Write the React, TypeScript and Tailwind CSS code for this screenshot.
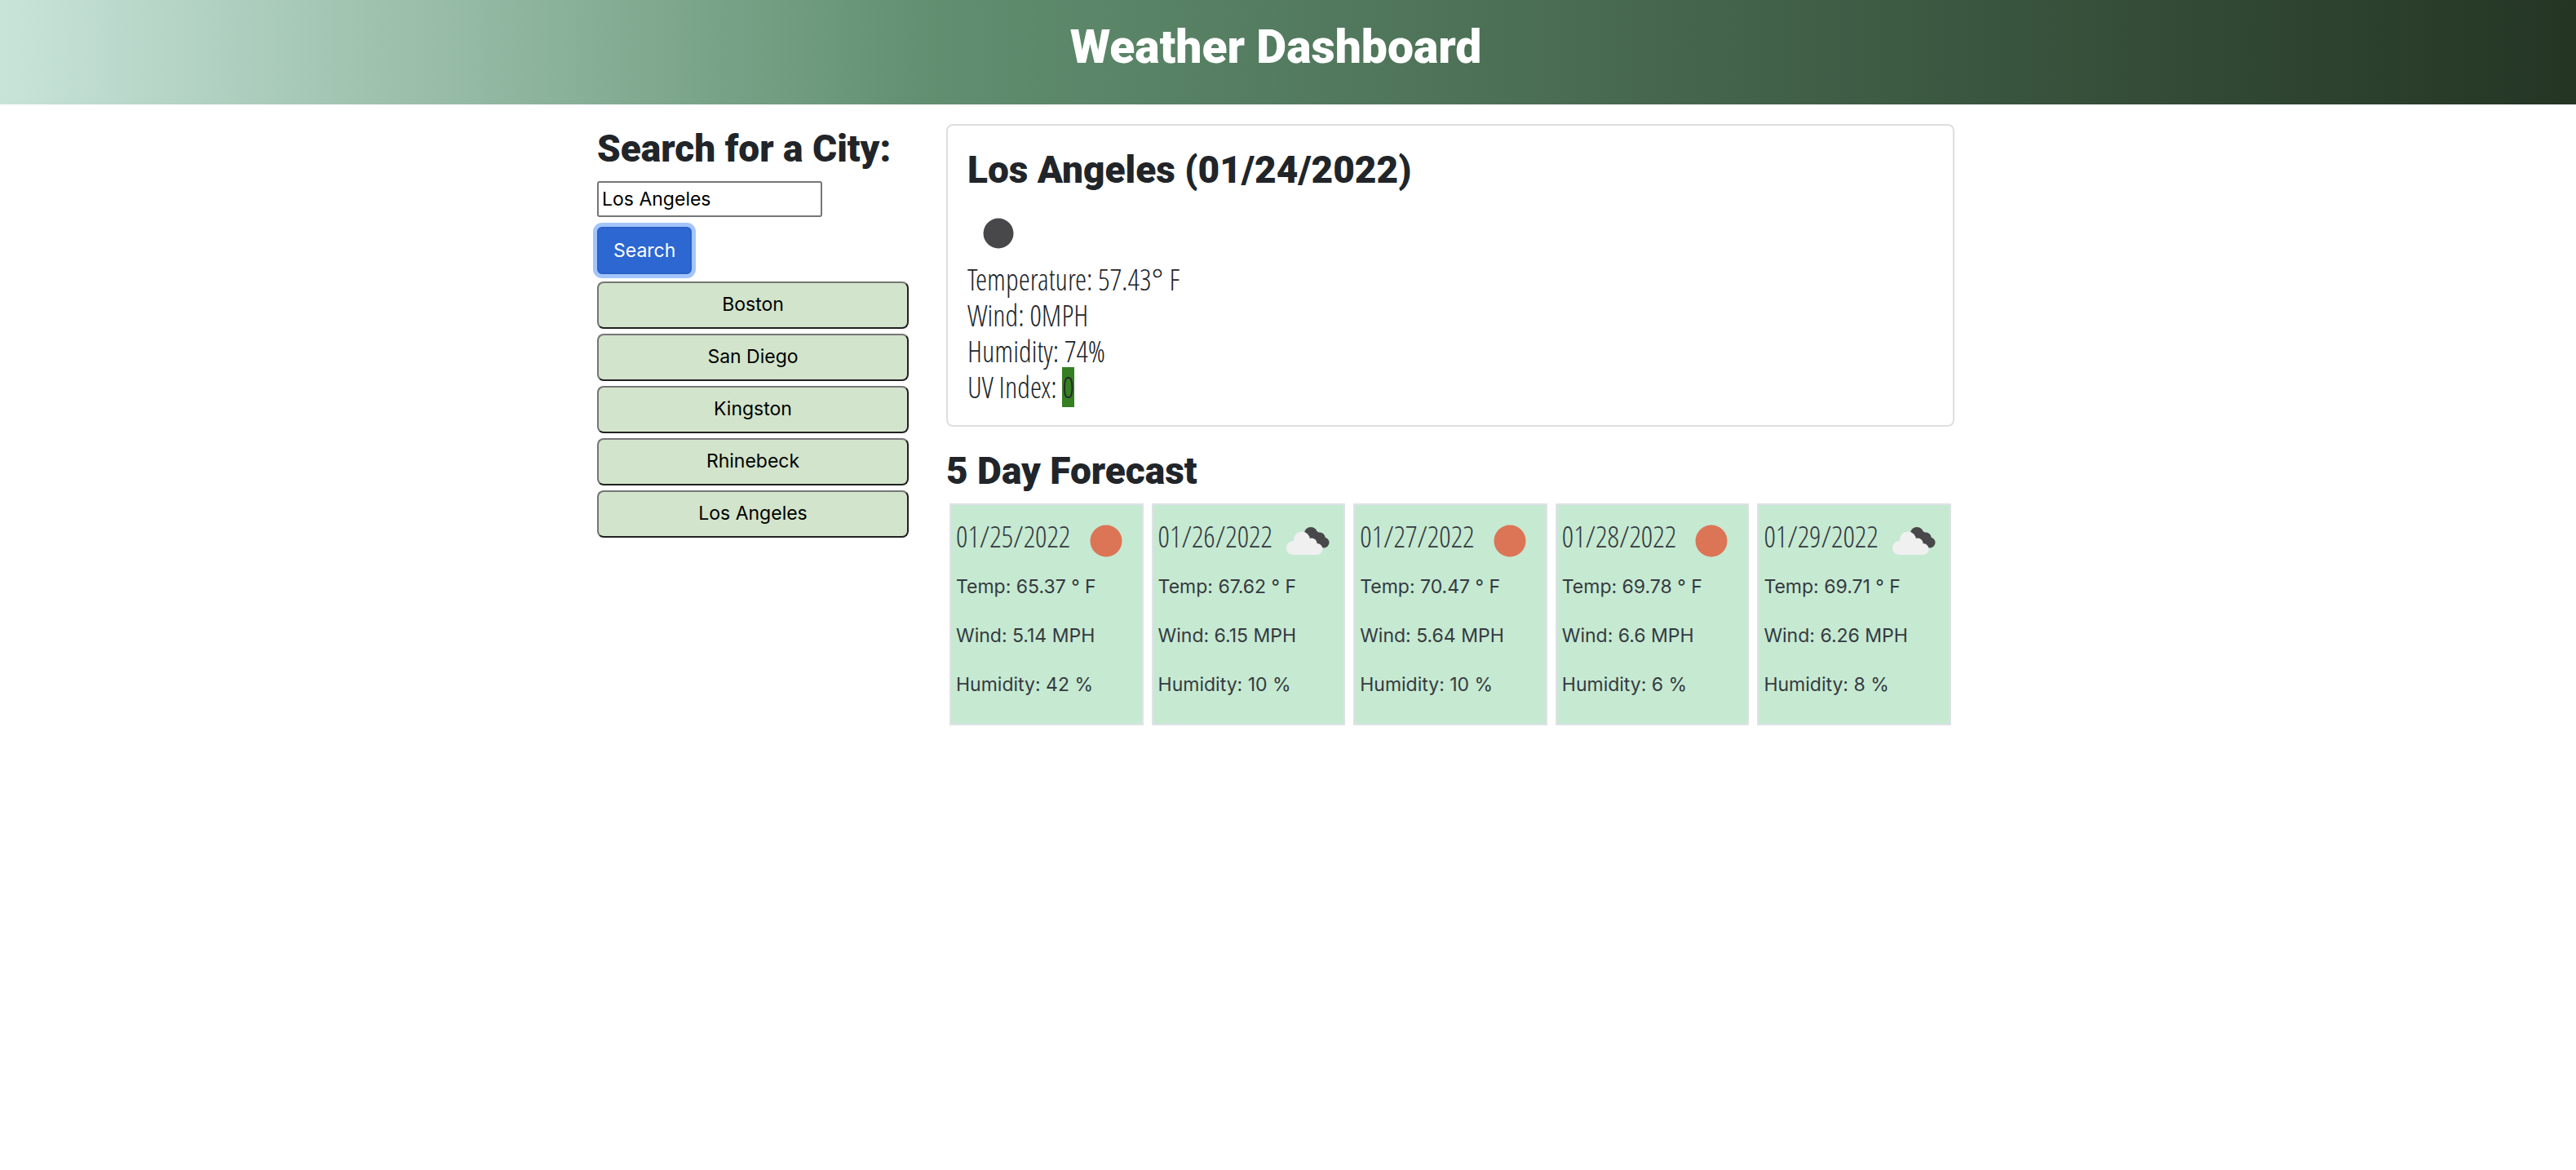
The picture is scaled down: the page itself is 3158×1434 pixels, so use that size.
const HEADING = "font-['Roboto',sans-serif] font-black";
const CONDENSED = "font-['Open_Sans_Condensed_Light','Open_Sans_Condensed',sans-serif] font-light";

const cities = ["Boston", "San Diego", "Kingston", "Rhinebeck", "Los Angeles"];

type Sky = "clear" | "broken";

const forecast: { date: string; sky: Sky; temp: string; wind: string; humidity: string }[] = [
  { date: "01/25/2022", sky: "clear", temp: "65.37", wind: "5.14", humidity: "42" },
  { date: "01/26/2022", sky: "broken", temp: "67.62", wind: "6.15", humidity: "10" },
  { date: "01/27/2022", sky: "clear", temp: "70.47", wind: "5.64", humidity: "10" },
  { date: "01/28/2022", sky: "clear", temp: "69.78", wind: "6.6", humidity: "6" },
  { date: "01/29/2022", sky: "broken", temp: "69.71", wind: "6.26", humidity: "8" },
];

function SkyIcon({ sky }: { sky: Sky }) {
  if (sky === "clear") {
    return (
      <svg viewBox="0 0 60 60" className="size-[60px] shrink-0" role="img" aria-label="Clear sky">
        <circle cx="30" cy="30" r="19.5" fill="#dc7556" />
      </svg>
    );
  }
  return (
    <svg viewBox="0 0 60 60" className="size-[60px] shrink-0" role="img" aria-label="Broken clouds">
      <g fill="#48484a">
        <circle cx="34" cy="21" r="8" />
        <circle cx="45" cy="26" r="6.500" />
        <circle cx="50" cy="32" r="6.500" />
        <path d="M30 25L36 15L48 22L54 36L46 38Z" />
      </g>
      <g fill="#f0f0f1">
        <circle cx="12.500" cy="38.500" r="8.500" />
        <circle cx="23" cy="28.500" r="10" />
        <circle cx="35" cy="33" r="6.500" />
        <circle cx="41.500" cy="40" r="7" />
        <path d="M12 31L23 26L35 29L43 38L41.500 47H12.500Z" />
      </g>
    </svg>
  );
}

export default function App() {
  return (
    <div className="min-h-screen bg-white font-['Inter',sans-serif] text-[23px] leading-9 text-[#212529]">
      <header className="h-32 bg-[linear-gradient(to_right,#c8e4d9_0%,#618f70_36%,#243524_100%)] pr-[30px] pt-6">
        <h1 className={`${HEADING} text-center text-[57px] leading-[68px] text-white`}>Weather Dashboard</h1>
      </header>

      <div className="pr-[30px]">
        <main className="mx-auto grid w-full max-w-[1664px] grid-cols-[382px_minmax(0,1fr)] gap-[46px] pt-6">
          <aside>
            <form onSubmit={(e) => e.preventDefault()}>
              <label htmlFor="city" className={`${HEADING} block whitespace-nowrap text-[46px] leading-[60px]`}>
                Search for a City:
              </label>
              <input
                id="city"
                type="text"
                defaultValue="Los Angeles"
                className="mt-[10px] block h-11 w-[276px] rounded-[3px] border-2 border-[#767676] bg-white px-1 text-black"
              />
              <button
                type="submit"
                className="mt-3 block h-[58px] rounded-md border-2 border-[#2a61c6] bg-[#2c67d2] px-[18px] text-white ring-5 ring-[#a3c5fb]"
              >
                Search
              </button>
            </form>
            <div className="mt-[9px] flex flex-col gap-[6px]">
              {cities.map((city) => (
                <button
                  key={city}
                  type="button"
                  className="h-[58px] w-full rounded-lg border-2 border-b-[#212121] border-l-[#767676] border-r-[#212121] border-t-[#767676] bg-[#d2e4cb] pb-[2px] text-black"
                >
                  {city}
                </button>
              ))}
            </div>
          </aside>

          <div>
            <section className="rounded-lg border-2 border-[#dfdfdf] px-6 pb-6 pt-6">
              <h2 className={`${HEADING} text-[46px] leading-[60px]`}>Los Angeles (01/24/2022)</h2>
              <svg viewBox="0 0 80 75" className="mt-2 h-[75px] w-20" role="img" aria-label="Clear night">
                <circle cx="38" cy="40" r="18.5" fill="#48484a" />
              </svg>
              <div className={`${CONDENSED} text-[36px] leading-[44px]`}>
                <p>Temperature: 57.43° F</p>
                <p>Wind: 0MPH</p>
                <p>Humidity: 74%</p>
                <p>
                  UV Index: <span className="bg-[#367f22]">0</span>
                </p>
              </div>
            </section>

            <section>
              <h2 className={`${HEADING} mt-6 text-[46px] leading-[60px]`}>5 Day Forecast</h2>
              <div className="mt-[10px] grid grid-cols-5 gap-[10px] px-1">
                {forecast.map((day) => (
                  <article
                    key={day.date}
                    className="h-[272px] border-2 border-[#dee2e6] bg-[#c6e9d2] px-[6px] pt-[14px] text-[#343a40]"
                  >
                    <div className="flex h-[60px] justify-between pr-2">
                      <h3 className={`${CONDENSED} pt-[3px] text-[36px] leading-[44px]`}>{day.date}</h3>
                      <SkyIcon sky={day.sky} />
                    </div>
                    <p className="mt-2">Temp: {day.temp} ° F</p>
                    <p className="mt-6">Wind: {day.wind} MPH</p>
                    <p className="mt-6">Humidity: {day.humidity} %</p>
                  </article>
                ))}
              </div>
            </section>
          </div>
        </main>
      </div>
    </div>
  );
}
